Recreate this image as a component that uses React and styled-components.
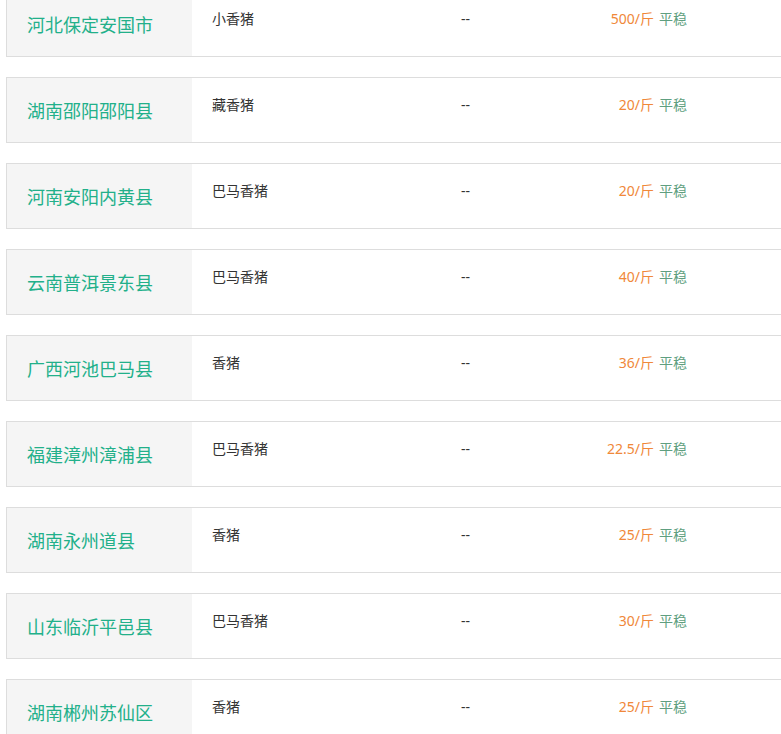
import React from "react";
import styled, { createGlobalStyle } from "styled-components";

const Global = createGlobalStyle`
  html, body {
    margin: 0;
    padding: 0;
    overflow: hidden;
    background: #fff;
  }
  body {
    font-family: "Noto Sans", "Noto Sans CJK SC", sans-serif;
  }
`;

const List = styled.div`
  margin-top: -9px;
  padding-left: 6px;
  display: flex;
  flex-direction: column;
  gap: 20px;
`;

const Row = styled.div`
  display: flex;
  height: 64px;
  border: 1px solid #dddddd;
  border-right: none;
  background: #fff;
`;

const Name = styled.div`
  box-sizing: border-box;
  width: 185px;
  flex-shrink: 0;
  background: #f5f5f5;
  padding-left: 20px;
  display: flex;
  align-items: center;
  font-size: 18px;
  color: #22b08a;
  font-family: "Noto Sans CJK SC", sans-serif;
`;

const Cell = styled.div`
  box-sizing: border-box;
  flex-shrink: 0;
  width: ${(p) => p.$w}px;
  padding-top: 17px;
  padding-left: ${(p) => p.$pl || 0}px;
  font-size: 14px;
  line-height: 20px;
  color: #333;
  text-align: ${(p) => p.$align || "left"};
`;

const Price = styled.span`
  color: #f0883a;
`;

const Trend = styled.span`
  color: #5f9f80;
  margin-left: 5px;
`;

const data = [
  ["河北保定安国市", "小香猪", "500/斤"],
  ["湖南邵阳邵阳县", "藏香猪", "20/斤"],
  ["河南安阳内黄县", "巴马香猪", "20/斤"],
  ["云南普洱景东县", "巴马香猪", "40/斤"],
  ["广西河池巴马县", "香猪", "36/斤"],
  ["福建漳州漳浦县", "巴马香猪", "22.5/斤"],
  ["湖南永州道县", "香猪", "25/斤"],
  ["山东临沂平邑县", "巴马香猪", "30/斤"],
  ["湖南郴州苏仙区", "香猪", "25/斤"],
];

export default function App() {
  return (
    <>
      <Global />
      <List>
        {data.map(([name, breed, price]) => (
          <Row key={name}>
            <Name>{name}</Name>
            <Cell $w={269} $pl={20}>{breed}</Cell>
            <Cell $w={120}>--</Cell>
            <Cell $w={106} $align="right">
              <Price>{price}</Price>
              <Trend>平稳</Trend>
            </Cell>
          </Row>
        ))}
      </List>
    </>
  );
}
